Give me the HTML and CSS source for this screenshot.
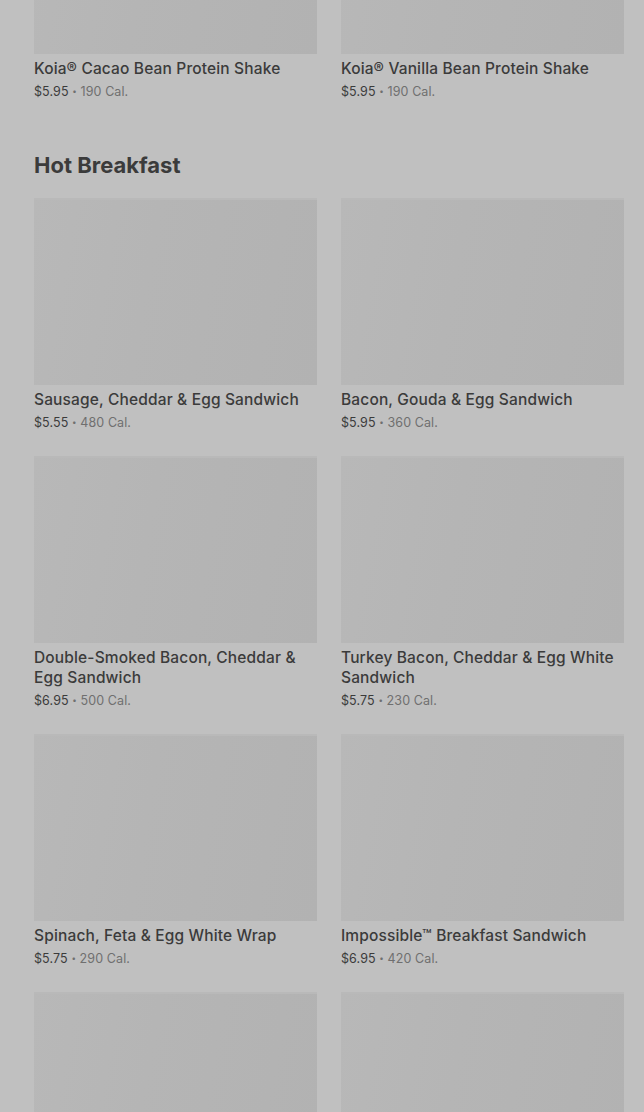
FILE: index.html
```html
<!DOCTYPE html>
<html lang="en">
<head>
    <meta charset="UTF-8">
    <meta name="viewport" content="width=device-width, initial-scale=1.0">
    <title>Menu</title>
    <link rel="stylesheet" href="styles.css">
</head>
<body>
    <div class="menu">
        <section class="category first">
            <div class="grid">
                <div class="item">
                    <div class="thumb"></div>
                    <h3 class="name">Koia® Cacao Bean Protein Shake</h3>
                    <p class="meta">$5.95 <span class="dot">•</span> <span class="cal">190 Cal.</span></p>
                </div>
                <div class="item">
                    <div class="thumb"></div>
                    <h3 class="name">Koia® Vanilla Bean Protein Shake</h3>
                    <p class="meta">$5.95 <span class="dot">•</span> <span class="cal">190 Cal.</span></p>
                </div>
            </div>
        </section>

        <section class="category">
            <h2 class="category-title">Hot Breakfast</h2>
            <div class="grid">
                <div class="item">
                    <div class="thumb"></div>
                    <h3 class="name">Sausage, Cheddar &amp; Egg Sandwich</h3>
                    <p class="meta">$5.55 <span class="dot">•</span> <span class="cal">480 Cal.</span></p>
                </div>
                <div class="item">
                    <div class="thumb"></div>
                    <h3 class="name">Bacon, Gouda &amp; Egg Sandwich</h3>
                    <p class="meta">$5.95 <span class="dot">•</span> <span class="cal">360 Cal.</span></p>
                </div>
                <div class="item">
                    <div class="thumb"></div>
                    <h3 class="name">Double-Smoked Bacon, Cheddar &amp; Egg Sandwich</h3>
                    <p class="meta">$6.95 <span class="dot">•</span> <span class="cal">500 Cal.</span></p>
                </div>
                <div class="item">
                    <div class="thumb"></div>
                    <h3 class="name">Turkey Bacon, Cheddar &amp; Egg White Sandwich</h3>
                    <p class="meta">$5.75 <span class="dot">•</span> <span class="cal">230 Cal.</span></p>
                </div>
                <div class="item">
                    <div class="thumb"></div>
                    <h3 class="name">Spinach, Feta &amp; Egg White Wrap</h3>
                    <p class="meta">$5.75 <span class="dot">•</span> <span class="cal">290 Cal.</span></p>
                </div>
                <div class="item">
                    <div class="thumb"></div>
                    <h3 class="name">Impossible™ Breakfast Sandwich</h3>
                    <p class="meta">$6.95 <span class="dot">•</span> <span class="cal">420 Cal.</span></p>
                </div>
                <div class="item">
                    <div class="thumb"></div>
                </div>
                <div class="item">
                    <div class="thumb"></div>
                </div>
            </div>
        </section>
    </div>
</body>
</html>
```

FILE: styles.css
```css
body {
    margin: 0;
    padding: 0;
    background-color: #c0c0c0;
    font-family: Inter, "Noto Sans", sans-serif;
    color: #3b3b3b;
    overflow: hidden;
}

.menu {
    padding: 0 20px 0 34px;
    margin-top: -133px;
}

.category {
    margin-top: 49px;
}

.category.first {
    margin-top: 0;
}

.category-title {
    margin: 0 0 19px;
    font-size: 22px;
    line-height: 28px;
    height: 28px;
    font-weight: 700;
    color: #3b3b3b;
}

.grid {
    display: grid;
    grid-template-columns: 1fr 1fr;
    column-gap: 24px;
    row-gap: 23px;
}

.thumb {
    height: 187px;
    background: linear-gradient(100deg, #b8b8b8 0%, #b5b5b5 40%, #b2b2b2 100%);
    border-top: 2px solid #b9b9b9;
    box-sizing: border-box;
}

.name {
    margin: 5px 0 3px;
    font-size: 15.5px;
    line-height: 20px;
    font-weight: 500;
    letter-spacing: 0.15px;
    color: #3b3b3b;
}

.meta {
    margin: 0;
    height: 20px;
    font-size: 12.5px;
    line-height: 20px;
    letter-spacing: 0.1px;
    color: #3b3b3b;
    overflow: hidden;
}

.dot {
    color: #6f6f6f;
    font-size: 8px;
    line-height: 0;
    vertical-align: 2px;
}

.cal {
    color: #6f6f6f;
}
```
